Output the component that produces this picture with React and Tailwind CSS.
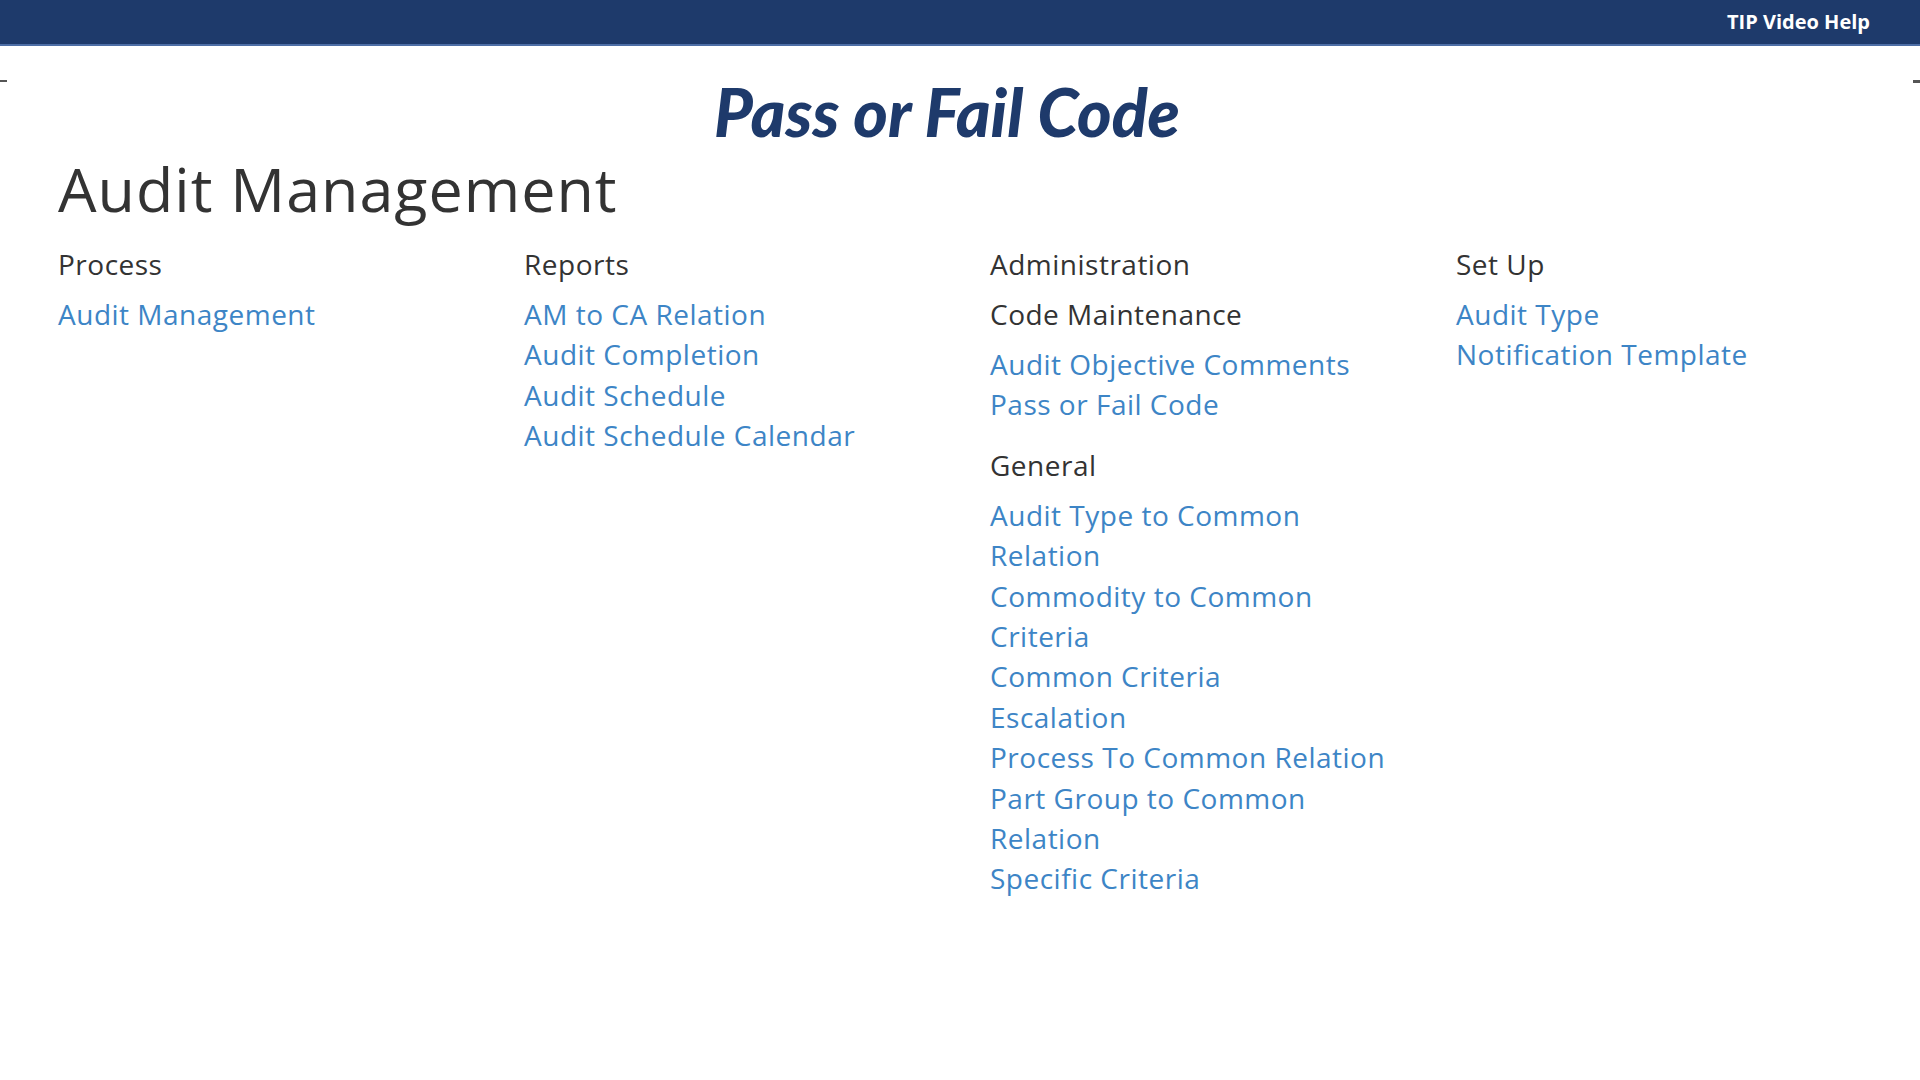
import React from "react";

const columns = [
  {
    title: "Process",
    groups: [{ links: [["Audit Management"]] }],
  },
  {
    title: "Reports",
    groups: [
      {
        links: [
          ["AM to CA Relation"],
          ["Audit Completion"],
          ["Audit Schedule"],
          ["Audit Schedule Calendar"],
        ],
      },
    ],
  },
  {
    title: "Administration",
    groups: [
      {
        name: "Code Maintenance",
        links: [["Audit Objective Comments"], ["Pass or Fail Code"]],
      },
      {
        name: "General",
        links: [
          ["Audit Type to Common", "Relation"],
          ["Commodity to Common", "Criteria"],
          ["Common Criteria", "Escalation"],
          ["Process To Common Relation"],
          ["Part Group to Common", "Relation"],
          ["Specific Criteria"],
        ],
      },
    ],
  },
  {
    title: "Set Up",
    groups: [{ links: [["Audit Type"], ["Notification Template"]] }],
  },
];

export default function App() {
  return (
    <div
      className="relative w-full min-h-[1080px] bg-white"
      style={{ fontFamily: '"Open Sans", "Liberation Sans", sans-serif' }}
    >
      {/* top bar */}
      <div className="flex h-[46px] items-center justify-end bg-[#1e3a6b] border-b-2 border-[#4d6ea6] pr-[50px]">
        <span className="text-[20px] font-bold text-white leading-none">TIP Video Help</span>
      </div>

      {/* little slide corner marks */}
      <div className="absolute left-0 top-[80px] h-[2px] w-[7px] bg-[#555]" />
      <div className="absolute right-0 top-[80px] h-[3px] w-[7px] bg-[#555]" />

      <div className="mt-[33px] flex justify-center pr-[26px]">
        <h2
          className="text-[66px] leading-[66px] font-black italic text-[#1e3a6b]"
          style={{ fontFamily: 'Lato, "Liberation Sans", sans-serif' }}
        >
          Pass or Fail Code
        </h2>
      </div>

      <div className="pl-[58px]">
        <h1 className="mt-[16px] text-[61px] leading-[55px] font-normal tracking-[1px] text-[#333]">
          Audit Management
        </h1>

        <div className="mt-[28px] grid grid-cols-[466px_466px_466px_466px]">
          {columns.map((col) => (
            <div key={col.title} className="flex flex-col">
              <div className="text-[28px] leading-[40px] tracking-[0.5px] text-[#333] mb-[10px]">
                {col.title}
              </div>
              {col.groups.map((g, gi) => (
                <div key={gi} className={gi > 0 ? "mt-[20px]" : ""}>
                  {g.name && (
                    <div className="text-[28px] leading-[40px] tracking-[0.5px] text-[#333] mb-[10px]">
                      {g.name}
                    </div>
                  )}
                  {g.links.map((lines, li) => (
                    <a
                      key={li}
                      href="#"
                      className="block text-[28px] leading-[40.4px] tracking-[0.5px] text-[#3d85c6] whitespace-nowrap"
                    >
                      {lines.map((l, i) => (
                        <span key={i} className="block">
                          {l}
                        </span>
                      ))}
                    </a>
                  ))}
                </div>
              ))}
            </div>
          ))}
        </div>
      </div>
    </div>
  );
}
